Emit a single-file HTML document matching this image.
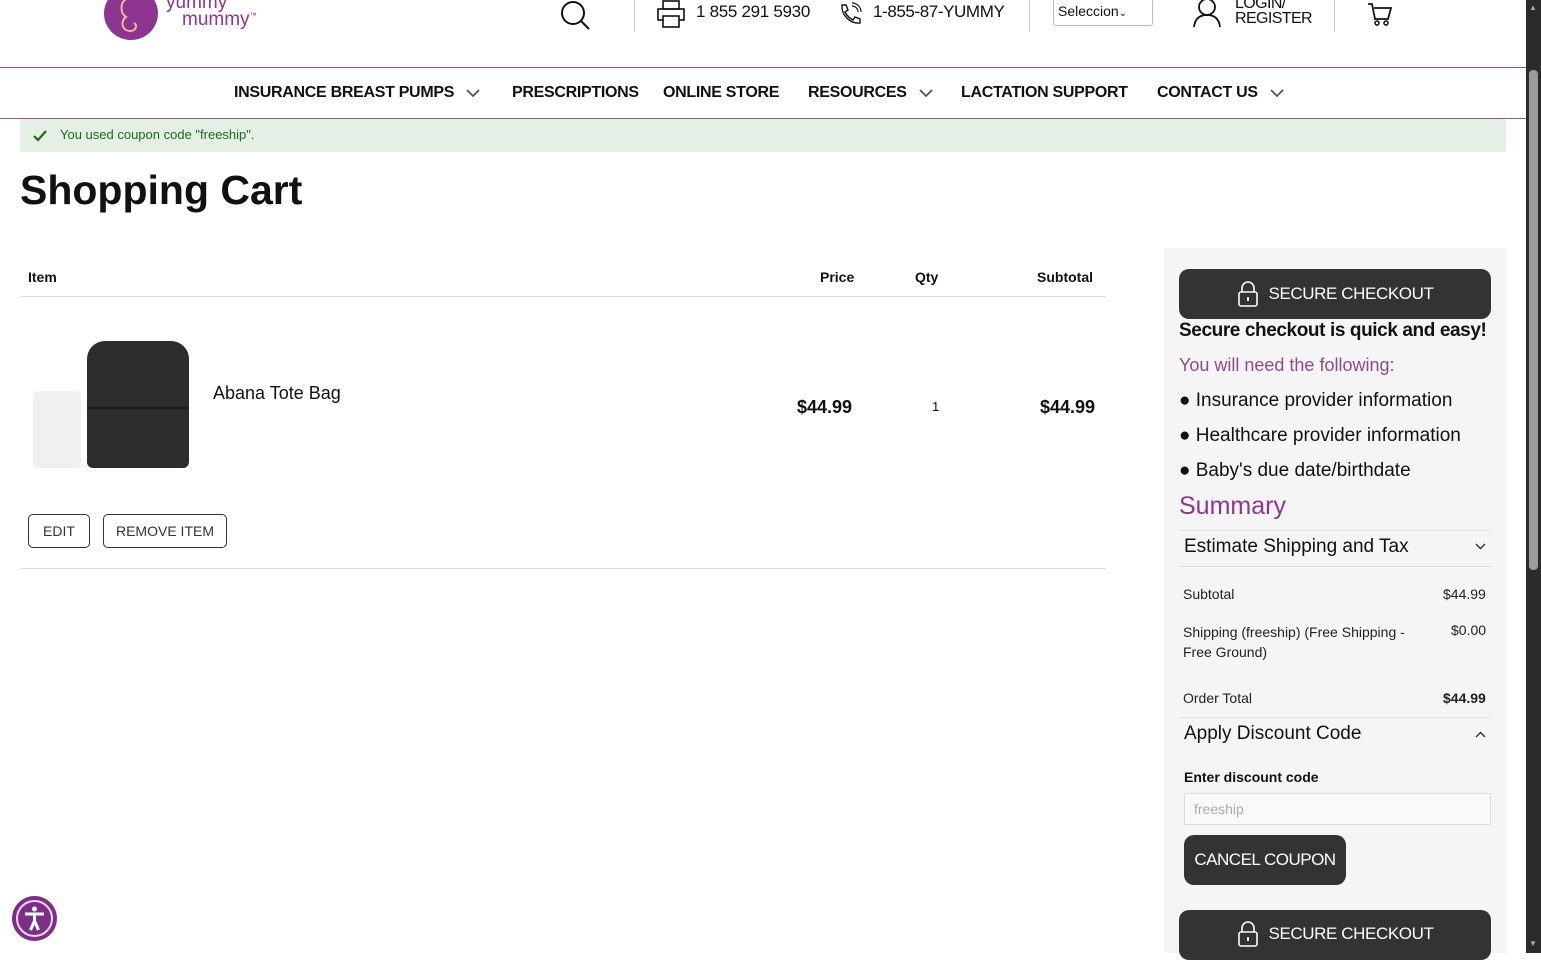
<!DOCTYPE html>
<html><head><meta charset="utf-8"><style>
*{margin:0;padding:0;box-sizing:border-box}
body{width:1541px;height:953px;overflow:hidden;background:#fff;font-family:"Liberation Sans",sans-serif;color:#111;position:relative}
.a{position:absolute;white-space:nowrap}
.nav{font-weight:bold;font-size:16px;top:83px;color:#111;display:flex;align-items:center;height:20px}
.nav svg{margin-left:12px}
.btn{position:absolute;background:#333;color:#fff;border-radius:10px;font-size:17px;display:flex;align-items:center;justify-content:center}
.side{font-size:14px;color:#222}
</style></head><body>
<div class="a" style="left:104px;top:-13px;width:54px;height:53px;border-radius:50%;background:#8e3592"></div>
<svg class="a" style="left:104px;top:-13px" width="54" height="53"><path d="M22 12c-6 4-6 14 0 18c-6 4-4 14 4 14c6 0 8-6 4-8" stroke="#f2b8a0" stroke-width="2" fill="none"/></svg>
<div class="a" style="left:166px;top:-8px;font-size:19px;color:#8e3592">yummy</div>
<div class="a" style="left:182px;top:9px;font-size:19px;color:#8e3592">mummy<sup style="font-size:7px">™</sup></div>
<svg class="a" style="left:559px;top:0" width="34" height="32"><circle cx="14" cy="13" r="11" stroke="#111" stroke-width="2" fill="none"/><path d="M22 21l8 8" stroke="#111" stroke-width="2"/></svg>
<div class="a" style="left:634px;top:0;width:1px;height:32px;background:#ccc"></div>
<svg class="a" style="left:656px;top:0" width="32" height="30"><rect x="7" y="1" width="16" height="8" stroke="#111" fill="none" stroke-width="1.6"/><rect x="2" y="9" width="26" height="11" stroke="#111" fill="none" stroke-width="1.6"/><rect x="7" y="16" width="16" height="11" stroke="#111" fill="#fff" stroke-width="1.6"/></svg>
<div class="a" style="left:696px;top:2px;font-size:17px;letter-spacing:-0.3px">1 855 291 5930</div>
<svg class="a" style="left:837px;top:2px" width="26" height="24"><path d="M5 3l4 0 2 5-3 2c2 4 4 6 8 8l2-3 5 2v4c-10 1-19-8-18-18z" stroke="#111" fill="none" stroke-width="1.4"/><path d="M15 4a6 6 0 0 1 6 6M15 1a9 9 0 0 1 9 9" stroke="#111" fill="none" stroke-width="1.2"/></svg>
<div class="a" style="left:873px;top:2px;font-size:17px;letter-spacing:-0.4px">1-855-87-YUMMY</div>
<div class="a" style="left:1029px;top:0;width:1px;height:32px;background:#ccc"></div>
<div class="a" style="left:1053px;top:-2px;width:100px;height:28px;border:1px solid #bbb;border-radius:3px;font-size:14px;padding:4px 4px">Seleccion<span style="font-size:10px">⌄</span></div>
<svg class="a" style="left:1192px;top:0" width="30" height="28"><circle cx="15" cy="7" r="8" stroke="#111" fill="none" stroke-width="1.8"/><path d="M2 27c1-9 6-12 13-12s12 3 13 12" stroke="#111" fill="none" stroke-width="1.8"/></svg>
<div class="a" style="left:1235px;top:-4px;font-size:16px;line-height:15px;letter-spacing:-0.6px">LOGIN/<br>REGISTER</div>
<div class="a" style="left:1334px;top:0;width:1px;height:32px;background:#ccc"></div>
<svg class="a" style="left:1366px;top:0" width="28" height="28"><path d="M2 4h4l3 15h13l3-11H8" stroke="#111" fill="none" stroke-width="1.8"/><circle cx="11" cy="23" r="2" stroke="#111" fill="none" stroke-width="1.5"/><circle cx="20" cy="23" r="2" stroke="#111" fill="none" stroke-width="1.5"/></svg>
<div class="a" style="left:0;top:67px;width:1526px;height:1px;background:#8e5a8f"></div>
<div class="a nav" style="left:234px;letter-spacing:-0.3px">INSURANCE BREAST PUMPS<svg width="14" height="9"><path d="M1 1l6 6 6-6" stroke="#555" stroke-width="1.8" fill="none"/></svg></div>
<div class="a nav" style="left:512px;letter-spacing:-0.3px">PRESCRIPTIONS</div>
<div class="a nav" style="left:663px;letter-spacing:-0.3px">ONLINE STORE</div>
<div class="a nav" style="left:808px;letter-spacing:-0.3px">RESOURCES<svg width="14" height="9"><path d="M1 1l6 6 6-6" stroke="#555" stroke-width="1.8" fill="none"/></svg></div>
<div class="a nav" style="left:961px;letter-spacing:-0.3px">LACTATION SUPPORT</div>
<div class="a nav" style="left:1157px;letter-spacing:-0.3px">CONTACT US<svg width="14" height="9"><path d="M1 1l6 6 6-6" stroke="#555" stroke-width="1.8" fill="none"/></svg></div>
<div class="a" style="left:0;top:118px;width:1526px;height:1px;background:#8e5a8f"></div>
<div class="a" style="left:20px;top:119px;width:1486px;height:33px;background:#e5efe5"></div>
<svg class="a" style="left:32px;top:129px" width="16" height="14"><path d="M2 7l4 4 8-9" stroke="#1d6b1d" stroke-width="2.2" fill="none"/></svg>
<div class="a" style="left:60px;top:127px;font-size:13px;color:#1d6b1d">You used coupon code "freeship".</div>
<div class="a" style="left:20px;top:167px;font-size:41px;font-weight:bold">Shopping Cart</div>
<div class="a" style="left:28px;top:269px;font-size:14px;font-weight:bold">Item</div>
<div class="a" style="left:820px;top:269px;font-size:14px;font-weight:bold">Price</div>
<div class="a" style="left:915px;top:269px;font-size:14px;font-weight:bold">Qty</div>
<div class="a" style="left:1037px;top:269px;font-size:14px;font-weight:bold">Subtotal</div>
<div class="a" style="left:20px;top:296px;width:1086px;height:1px;background:#ddd"></div>
<div class="a" style="left:33px;top:391px;width:48px;height:77px;background:#f0f0f0;border-radius:4px"></div>
<div class="a" style="left:87px;top:341px;width:102px;height:127px;background:#2c2c2c;border-radius:18px 18px 6px 6px"></div>
<div class="a" style="left:87px;top:407px;width:102px;height:2px;background:#1a1a1a"></div>
<div class="a" style="left:213px;top:383px;font-size:18px">Abana Tote Bag</div>
<div class="a" style="left:797px;top:397px;font-size:18px;font-weight:bold">$44.99</div>
<div class="a" style="left:932px;top:399px;font-size:13px">1</div>
<div class="a" style="left:1040px;top:397px;font-size:18px;font-weight:bold">$44.99</div>
<div class="a" style="left:28px;top:514px;width:62px;height:34px;border:1px solid #333;border-radius:5px;font-size:14px;text-align:center;line-height:32px;color:#333">EDIT</div>
<div class="a" style="left:103px;top:514px;width:124px;height:34px;border:1px solid #333;border-radius:5px;font-size:14px;text-align:center;line-height:32px;color:#333">REMOVE ITEM</div>
<div class="a" style="left:20px;top:568px;width:1086px;height:1px;background:#ddd"></div>
<div class="a" style="left:1164px;top:248px;width:342px;height:705px;background:#f5f5f5"></div>
<div class="btn" style="left:1179px;top:269px;width:312px;height:50px;letter-spacing:-0.4px"><svg width="22" height="28" style="margin-right:10px"><path d="M5 12V8a6 6 0 0 1 12 0v4" stroke="#fff" fill="none" stroke-width="1.6"/><rect x="2" y="12" width="18" height="14" rx="2" stroke="#fff" fill="none" stroke-width="1.6"/><path d="M11 17v4" stroke="#fff" stroke-width="2"/></svg>SECURE CHECKOUT</div>
<div class="a" style="left:1179px;top:320px;font-size:19px;font-weight:bold;letter-spacing:-0.4px">Secure checkout is quick and easy!</div>
<div class="a" style="left:1179px;top:355px;font-size:18px;color:#8e4a8f">You will need the following:</div>
<div class="a" style="left:1179px;top:390px;font-size:19px">● Insurance provider information</div>
<div class="a" style="left:1179px;top:425px;font-size:19px">● Healthcare provider information</div>
<div class="a" style="left:1179px;top:460px;font-size:19px">● Baby's due date/birthdate</div>
<div class="a" style="left:1179px;top:492px;font-size:25px;color:#8e3592">Summary</div>
<div class="a" style="left:1179px;top:530px;width:312px;height:1px;background:#ddd"></div>
<div class="a" style="left:1184px;top:536px;font-size:19px">Estimate Shipping and Tax</div>
<svg class="a" style="left:1475px;top:543px" width="11" height="7"><path d="M1 1l4.5 4.5L10 1" stroke="#333" stroke-width="1.4" fill="none"/></svg>
<div class="a" style="left:1179px;top:566px;width:312px;height:1px;background:#ddd"></div>
<div class="a side" style="left:1183px;top:586px">Subtotal</div>
<div class="a side" style="left:1443px;top:586px">$44.99</div>
<div class="a side" style="left:1183px;top:622px;line-height:20px">Shipping (freeship) (Free Shipping -<br>Free Ground)</div>
<div class="a side" style="left:1451px;top:622px">$0.00</div>
<div class="a side" style="left:1183px;top:690px">Order Total</div>
<div class="a side" style="left:1443px;top:690px;font-weight:bold">$44.99</div>
<div class="a" style="left:1179px;top:717px;width:312px;height:1px;background:#ddd"></div>
<div class="a" style="left:1184px;top:723px;font-size:19px">Apply Discount Code</div>
<svg class="a" style="left:1475px;top:731px" width="11" height="7"><path d="M1 6l4.5-4.5L10 6" stroke="#333" stroke-width="1.4" fill="none"/></svg>
<div class="a" style="left:1184px;top:769px;font-size:14px;font-weight:bold">Enter discount code</div>
<div class="a" style="left:1184px;top:793px;width:307px;height:32px;background:#fafafa;border:1px solid #ddd;font-size:14px;color:#aaa;padding:7px 9px">freeship</div>
<div class="btn" style="left:1184px;top:835px;width:162px;height:50px;letter-spacing:-0.5px">CANCEL COUPON</div>
<div class="btn" style="left:1179px;top:910px;width:312px;height:50px;align-items:flex-start;padding-top:10px;letter-spacing:-0.4px"><svg width="22" height="28" style="margin-right:10px"><path d="M5 12V8a6 6 0 0 1 12 0v4" stroke="#fff" fill="none" stroke-width="1.6"/><rect x="2" y="12" width="18" height="14" rx="2" stroke="#fff" fill="none" stroke-width="1.6"/><path d="M11 17v4" stroke="#fff" stroke-width="2"/></svg><span style="margin-top:4px">SECURE CHECKOUT</span></div>
<div class="a" style="left:12px;top:896px;width:45px;height:45px;border-radius:50%;background:#7d2f86"></div>
<div class="a" style="left:16px;top:900px;width:37px;height:37px;border-radius:50%;border:2px solid #f0d8f0"></div>
<svg class="a" style="left:12px;top:896px" width="45" height="45"><circle cx="22.5" cy="13" r="2.5" fill="#fff"/><path d="M13 18h19M22.5 18v8M22.5 25l-4 9M22.5 25l4 9" stroke="#fff" stroke-width="3" fill="none"/></svg>
<div class="a" style="left:1526px;top:0;width:15px;height:953px;background:#2b2b2b"></div>
<div class="a" style="left:1529px;top:70px;width:9px;height:500px;background:#9b9b9b;border-radius:4px"></div>
<div class="a" style="left:1529px;top:3px;font-size:8px;color:#aaa">▲</div>
<div class="a" style="left:1529px;top:939px;font-size:8px;color:#aaa">▼</div>
</body></html>
